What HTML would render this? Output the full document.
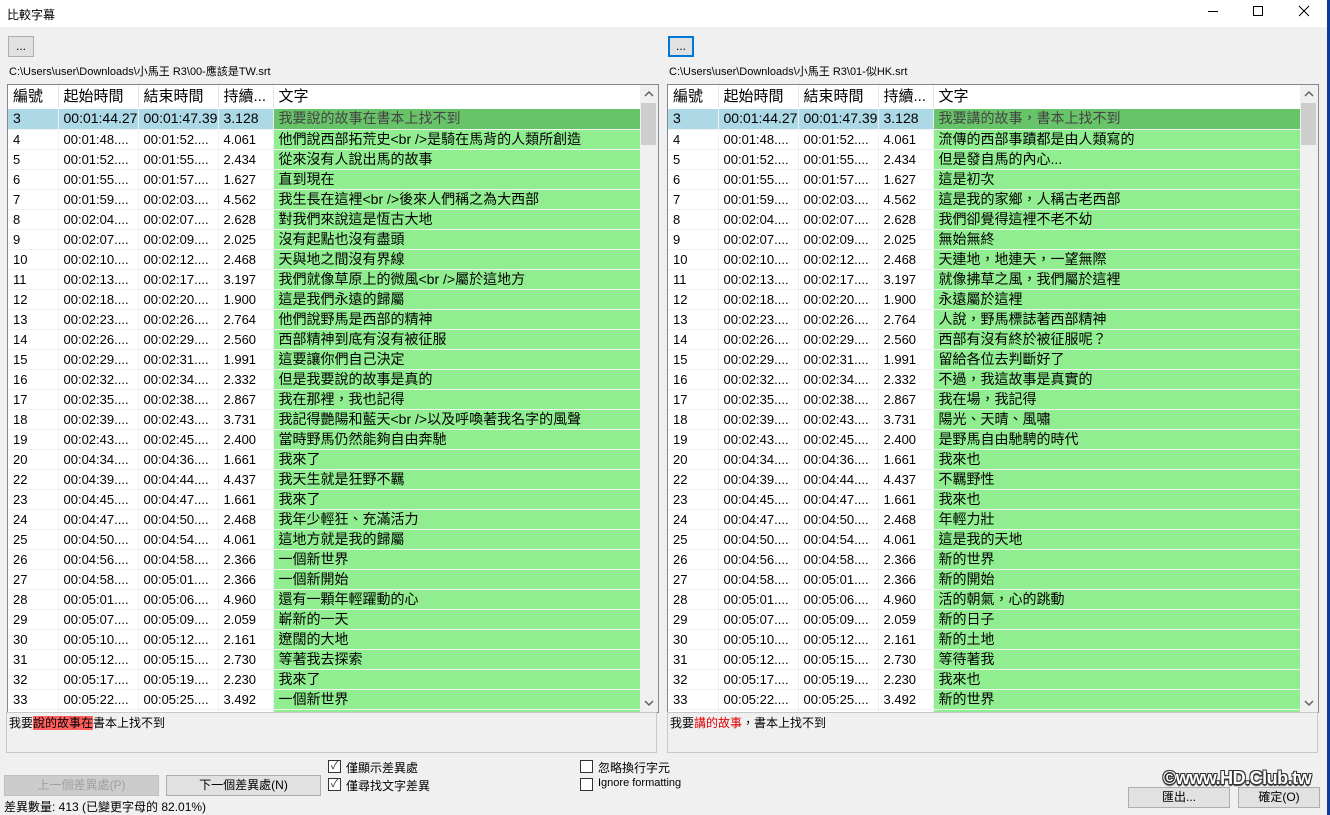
<!DOCTYPE html>
<html><head><meta charset="utf-8">
<style>
*{margin:0;padding:0;box-sizing:border-box}
body{width:1330px;height:815px;background:#f0f0f0;position:relative;overflow:hidden;font-family:"Liberation Sans","Noto Sans CJK TC",sans-serif;font-size:12px;color:#000}
.abs{position:absolute}
#title{left:0;top:0;width:1327px;height:27px;background:#fff}
#blue{left:1327px;top:0;width:3px;height:815px;background:#0b3c9c}
.btn{position:absolute;background:#e1e1e1;border:1px solid #adadad;text-align:center;font-size:12px;line-height:18px}
.list{position:absolute;top:84px;width:652px;height:629px;border:1px solid #828790;background:#fff;overflow:hidden}
table{border-collapse:collapse;table-layout:fixed;position:absolute;left:0;top:0}
td{height:20px;white-space:nowrap;overflow:hidden;border-bottom:1px solid #f0f0f0;border-right:1px solid #f0f0f0;padding-left:5px;font-size:13px;line-height:19px}
td.t{background:#90ee90;font-size:14px;padding-left:5px}
tr.h td{height:24px;font-size:15px;background:#fff;border-bottom:none;line-height:24px;border-right:1px solid #e5e5e5}
tr.s td{background:#add8e6;font-size:14px}
tr.s td.t{background:#68c468;color:#444}
.sb{position:absolute;right:0;top:0;width:18px;height:627px;background:#f0f0f0}
.thumb{position:absolute;left:1px;top:18px;width:15px;height:42px;background:#cdcdcd}
.arr{position:absolute;left:0;width:18px}
.pane{position:absolute;top:712px;width:651px;height:41px;border:1px solid #c8c8c8;background:#f0f0f0;font-size:12px;padding:1px 2px}
.cb{position:absolute;width:13px;height:13px;border:1px solid #333;background:#fff;font-size:11px;line-height:11px;text-align:center;color:#333}
.lbl{position:absolute;font-size:12px}
</style></head><body>
<div id="title" class="abs"><span class="abs" style="left:7px;top:6px;font-size:12px">比較字幕</span>
<svg class="abs" style="left:1150px;top:0" width="177" height="27"><line x1="58" y1="11.5" x2="68" y2="11.5" stroke="#000"/><rect x="103.5" y="6.5" width="9" height="9" fill="none" stroke="#000"/><path d="M149 6L159 16M159 6L149 16" stroke="#000"/></svg></div>
<div id="blue" class="abs"></div>

<div class="btn" style="left:8px;top:36px;width:26px;height:21px">...</div>
<div class="btn" style="left:668px;top:36px;width:26px;height:21px;border:2px solid #0078d7;line-height:16px">...</div>
<div class="lbl" style="left:9px;top:63px;font-size:11px">C:\Users\user\Downloads\小馬王  R3\00-應該是TW.srt</div>
<div class="lbl" style="left:669px;top:63px;font-size:11px">C:\Users\user\Downloads\小馬王  R3\01-似HK.srt</div>

<div class="list" style="left:7px">
<table style="width:632px"><colgroup><col style="width:50px"><col style="width:80px"><col style="width:80px"><col style="width:55px"><col style="width:367px"></colgroup>
<tr class="h"><td>編號</td><td>起始時間</td><td>結束時間</td><td>持續...</td><td>文字</td></tr>
<tr class="s"><td>3</td><td>00:01:44.27</td><td>00:01:47.39</td><td>3.128</td><td class="t">我要說的故事在書本上找不到</td></tr>
<tr><td>4</td><td>00:01:48....</td><td>00:01:52....</td><td>4.061</td><td class="t">他們說西部拓荒史&lt;br /&gt;是騎在馬背的人類所創造</td></tr>
<tr><td>5</td><td>00:01:52....</td><td>00:01:55....</td><td>2.434</td><td class="t">從來沒有人說出馬的故事</td></tr>
<tr><td>6</td><td>00:01:55....</td><td>00:01:57....</td><td>1.627</td><td class="t">直到現在</td></tr>
<tr><td>7</td><td>00:01:59....</td><td>00:02:03....</td><td>4.562</td><td class="t">我生長在這裡&lt;br /&gt;後來人們稱之為大西部</td></tr>
<tr><td>8</td><td>00:02:04....</td><td>00:02:07....</td><td>2.628</td><td class="t">對我們來說這是恆古大地</td></tr>
<tr><td>9</td><td>00:02:07....</td><td>00:02:09....</td><td>2.025</td><td class="t">沒有起點也沒有盡頭</td></tr>
<tr><td>10</td><td>00:02:10....</td><td>00:02:12....</td><td>2.468</td><td class="t">天與地之間沒有界線</td></tr>
<tr><td>11</td><td>00:02:13....</td><td>00:02:17....</td><td>3.197</td><td class="t">我們就像草原上的微風&lt;br /&gt;屬於這地方</td></tr>
<tr><td>12</td><td>00:02:18....</td><td>00:02:20....</td><td>1.900</td><td class="t">這是我們永遠的歸屬</td></tr>
<tr><td>13</td><td>00:02:23....</td><td>00:02:26....</td><td>2.764</td><td class="t">他們說野馬是西部的精神</td></tr>
<tr><td>14</td><td>00:02:26....</td><td>00:02:29....</td><td>2.560</td><td class="t">西部精神到底有沒有被征服</td></tr>
<tr><td>15</td><td>00:02:29....</td><td>00:02:31....</td><td>1.991</td><td class="t">這要讓你們自己決定</td></tr>
<tr><td>16</td><td>00:02:32....</td><td>00:02:34....</td><td>2.332</td><td class="t">但是我要說的故事是真的</td></tr>
<tr><td>17</td><td>00:02:35....</td><td>00:02:38....</td><td>2.867</td><td class="t">我在那裡，我也記得</td></tr>
<tr><td>18</td><td>00:02:39....</td><td>00:02:43....</td><td>3.731</td><td class="t">我記得艷陽和藍天&lt;br /&gt;以及呼喚著我名字的風聲</td></tr>
<tr><td>19</td><td>00:02:43....</td><td>00:02:45....</td><td>2.400</td><td class="t">當時野馬仍然能夠自由奔馳</td></tr>
<tr><td>20</td><td>00:04:34....</td><td>00:04:36....</td><td>1.661</td><td class="t">我來了</td></tr>
<tr><td>22</td><td>00:04:39....</td><td>00:04:44....</td><td>4.437</td><td class="t">我天生就是狂野不羈</td></tr>
<tr><td>23</td><td>00:04:45....</td><td>00:04:47....</td><td>1.661</td><td class="t">我來了</td></tr>
<tr><td>24</td><td>00:04:47....</td><td>00:04:50....</td><td>2.468</td><td class="t">我年少輕狂、充滿活力</td></tr>
<tr><td>25</td><td>00:04:50....</td><td>00:04:54....</td><td>4.061</td><td class="t">這地方就是我的歸屬</td></tr>
<tr><td>26</td><td>00:04:56....</td><td>00:04:58....</td><td>2.366</td><td class="t">一個新世界</td></tr>
<tr><td>27</td><td>00:04:58....</td><td>00:05:01....</td><td>2.366</td><td class="t">一個新開始</td></tr>
<tr><td>28</td><td>00:05:01....</td><td>00:05:06....</td><td>4.960</td><td class="t">還有一顆年輕躍動的心</td></tr>
<tr><td>29</td><td>00:05:07....</td><td>00:05:09....</td><td>2.059</td><td class="t">嶄新的一天</td></tr>
<tr><td>30</td><td>00:05:10....</td><td>00:05:12....</td><td>2.161</td><td class="t">遼闊的大地</td></tr>
<tr><td>31</td><td>00:05:12....</td><td>00:05:15....</td><td>2.730</td><td class="t">等著我去探索</td></tr>
<tr><td>32</td><td>00:05:17....</td><td>00:05:19....</td><td>2.230</td><td class="t">我來了</td></tr>
<tr><td>33</td><td>00:05:22....</td><td>00:05:25....</td><td>3.492</td><td class="t">一個新世界</td></tr>
<tr><td></td><td></td><td></td><td></td><td class="t"></td></tr>
</table>
<div class="sb"><svg class="arr" style="top:0" width="18" height="18"><path d="M5 11L9 7L13 11" fill="none" stroke="#606060" stroke-width="1.5"/></svg><div class="thumb"></div><svg class="arr" style="top:609px" width="18" height="18"><path d="M5 7L9 11L13 7" fill="none" stroke="#606060" stroke-width="1.5"/></svg></div>
</div>

<div class="list" style="left:667px">
<table style="width:632px"><colgroup><col style="width:50px"><col style="width:80px"><col style="width:80px"><col style="width:55px"><col style="width:367px"></colgroup>
<tr class="h"><td>編號</td><td>起始時間</td><td>結束時間</td><td>持續...</td><td>文字</td></tr>
<tr class="s"><td>3</td><td>00:01:44.27</td><td>00:01:47.39</td><td>3.128</td><td class="t">我要講的故事，書本上找不到</td></tr>
<tr><td>4</td><td>00:01:48....</td><td>00:01:52....</td><td>4.061</td><td class="t">流傳的西部事蹟都是由人類寫的</td></tr>
<tr><td>5</td><td>00:01:52....</td><td>00:01:55....</td><td>2.434</td><td class="t">但是發自馬的內心...</td></tr>
<tr><td>6</td><td>00:01:55....</td><td>00:01:57....</td><td>1.627</td><td class="t">這是初次</td></tr>
<tr><td>7</td><td>00:01:59....</td><td>00:02:03....</td><td>4.562</td><td class="t">這是我的家鄉，人稱古老西部</td></tr>
<tr><td>8</td><td>00:02:04....</td><td>00:02:07....</td><td>2.628</td><td class="t">我們卻覺得這裡不老不幼</td></tr>
<tr><td>9</td><td>00:02:07....</td><td>00:02:09....</td><td>2.025</td><td class="t">無始無終</td></tr>
<tr><td>10</td><td>00:02:10....</td><td>00:02:12....</td><td>2.468</td><td class="t">天連地，地連天，一望無際</td></tr>
<tr><td>11</td><td>00:02:13....</td><td>00:02:17....</td><td>3.197</td><td class="t">就像拂草之風，我們屬於這裡</td></tr>
<tr><td>12</td><td>00:02:18....</td><td>00:02:20....</td><td>1.900</td><td class="t">永遠屬於這裡</td></tr>
<tr><td>13</td><td>00:02:23....</td><td>00:02:26....</td><td>2.764</td><td class="t">人說，野馬標誌著西部精神</td></tr>
<tr><td>14</td><td>00:02:26....</td><td>00:02:29....</td><td>2.560</td><td class="t">西部有沒有終於被征服呢？</td></tr>
<tr><td>15</td><td>00:02:29....</td><td>00:02:31....</td><td>1.991</td><td class="t">留給各位去判斷好了</td></tr>
<tr><td>16</td><td>00:02:32....</td><td>00:02:34....</td><td>2.332</td><td class="t">不過，我這故事是真實的</td></tr>
<tr><td>17</td><td>00:02:35....</td><td>00:02:38....</td><td>2.867</td><td class="t">我在場，我記得</td></tr>
<tr><td>18</td><td>00:02:39....</td><td>00:02:43....</td><td>3.731</td><td class="t">陽光、天晴、風嘯</td></tr>
<tr><td>19</td><td>00:02:43....</td><td>00:02:45....</td><td>2.400</td><td class="t">是野馬自由馳騁的時代</td></tr>
<tr><td>20</td><td>00:04:34....</td><td>00:04:36....</td><td>1.661</td><td class="t">我來也</td></tr>
<tr><td>22</td><td>00:04:39....</td><td>00:04:44....</td><td>4.437</td><td class="t">不羈野性</td></tr>
<tr><td>23</td><td>00:04:45....</td><td>00:04:47....</td><td>1.661</td><td class="t">我來也</td></tr>
<tr><td>24</td><td>00:04:47....</td><td>00:04:50....</td><td>2.468</td><td class="t">年輕力壯</td></tr>
<tr><td>25</td><td>00:04:50....</td><td>00:04:54....</td><td>4.061</td><td class="t">這是我的天地</td></tr>
<tr><td>26</td><td>00:04:56....</td><td>00:04:58....</td><td>2.366</td><td class="t">新的世界</td></tr>
<tr><td>27</td><td>00:04:58....</td><td>00:05:01....</td><td>2.366</td><td class="t">新的開始</td></tr>
<tr><td>28</td><td>00:05:01....</td><td>00:05:06....</td><td>4.960</td><td class="t">活的朝氣，心的跳動</td></tr>
<tr><td>29</td><td>00:05:07....</td><td>00:05:09....</td><td>2.059</td><td class="t">新的日子</td></tr>
<tr><td>30</td><td>00:05:10....</td><td>00:05:12....</td><td>2.161</td><td class="t">新的土地</td></tr>
<tr><td>31</td><td>00:05:12....</td><td>00:05:15....</td><td>2.730</td><td class="t">等待著我</td></tr>
<tr><td>32</td><td>00:05:17....</td><td>00:05:19....</td><td>2.230</td><td class="t">我來也</td></tr>
<tr><td>33</td><td>00:05:22....</td><td>00:05:25....</td><td>3.492</td><td class="t">新的世界</td></tr>
<tr><td></td><td></td><td></td><td></td><td class="t"></td></tr>
</table>
<div class="sb"><svg class="arr" style="top:0" width="18" height="18"><path d="M5 11L9 7L13 11" fill="none" stroke="#606060" stroke-width="1.5"/></svg><div class="thumb"></div><svg class="arr" style="top:609px" width="18" height="18"><path d="M5 7L9 11L13 7" fill="none" stroke="#606060" stroke-width="1.5"/></svg></div>
</div>

<div class="pane" style="left:6px">我要<span style="background:#ff5f5f">說的故事在</span>書本上找不到</div>
<div class="pane" style="left:667px">我要<span style="color:#e00000">講的故事</span>，書本上找不到</div>

<div class="btn" style="left:4px;top:775px;width:155px;height:21px;color:#a0a0a0;background:#cccccc;border-color:#bfbfbf">上一個差異處(P)</div>
<div class="btn" style="left:166px;top:775px;width:155px;height:21px">下一個差異處(N)</div>
<div class="cb" style="left:328px;top:760px">✓</div><div class="lbl" style="left:346px;top:759px">僅顯示差異處</div>
<div class="cb" style="left:328px;top:778px">✓</div><div class="lbl" style="left:346px;top:777px">僅尋找文字差異</div>
<div class="cb" style="left:580px;top:760px"></div><div class="lbl" style="left:598px;top:759px">忽略換行字元</div>
<div class="cb" style="left:580px;top:778px"></div><div class="lbl" style="left:598px;top:777px;font-size:11px">Ignore formatting</div>
<div class="lbl" style="left:4px;top:798px">差異數量: 413 (已變更字母的 82.01%)</div>
<div class="lbl" style="left:1163px;top:768px;font-size:18px;font-weight:bold;letter-spacing:-0.5px;color:#fff;text-shadow:-1px -1px 0 #333,1px -1px 0 #333,-1px 1px 0 #333,1px 1px 0 #333,0 2px 1px #333">©www.HD.Club.tw</div>
<div class="btn" style="left:1128px;top:787px;width:102px;height:21px">匯出...</div>
<div class="btn" style="left:1238px;top:787px;width:82px;height:21px">確定(O)</div>
</body></html>
